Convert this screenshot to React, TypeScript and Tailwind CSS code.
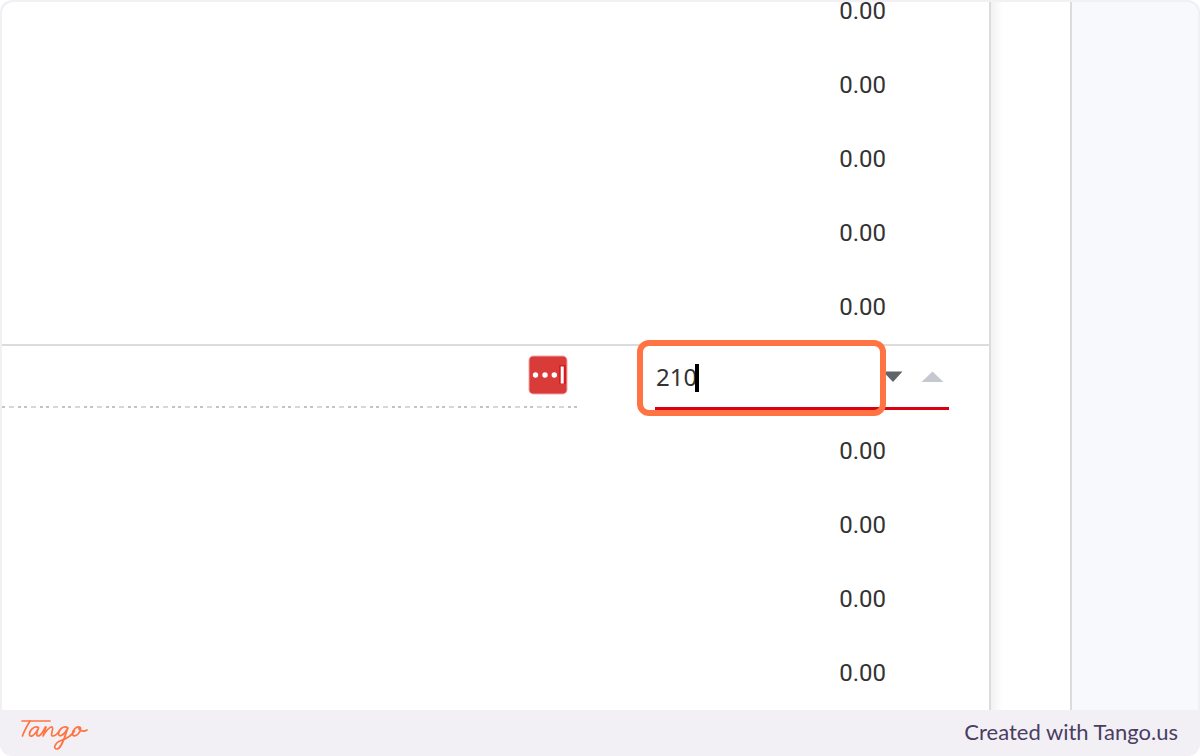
import React, { useState } from 'react';

const ROWS_ABOVE = ['0.00', '0.00', '0.00', '0.00', '0.00'];
const ROWS_BELOW = ['0.00', '0.00', '0.00', '0.00'];

const AmountRow = ({ value }: { value: string }) => (
  <li className="flex h-[74px] items-center justify-end pb-px pr-[103px] font-[Roboto,sans-serif] text-2xl text-[#333333]">
    {value}
  </li>
);

const PinIcon = () => (
  <svg viewBox="0 0 40 40" className="size-10" aria-hidden="true">
    <rect x="0.5" y="0.5" width="39" height="39" rx="5" fill="#efa9a7" />
    <rect x="1.5" y="1.5" width="37" height="37" rx="4" fill="#d83b38" />
    <rect x="31" y="10" width="7" height="19" rx="1" fill="#d61c1f" />
    <circle cx="7.5" cy="20" r="2.7" fill="#fff" />
    <circle cx="17" cy="20" r="2.7" fill="#fff" />
    <circle cx="26.3" cy="20" r="2.7" fill="#fff" />
    <rect x="32.7" y="11.5" width="3" height="17" fill="#fff" />
  </svg>
);

const TangoLogo = () => (
  <svg
    viewBox="0 0 76 40"
    className="h-10 w-[76px]"
    fill="none"
    stroke="#ff7442"
    strokeWidth="1.7"
    strokeLinecap="round"
    strokeLinejoin="round"
    role="img"
    aria-label="Tango"
  >
    <path d="M6 8H34" />
    <path d="M14 8C11 13 8 18 6.5 23" />
    <path d="M22.5 14.5C19 12 13.5 17 13.5 21C13.5 25 18.5 23.5 22.5 15C20.5 20 20 23 22 23C24.5 23 27.5 18 29.5 14" />
    <path d="M30 14L27 23C30 17.5 34 13.5 36 14C38.5 15 33.5 22.5 36.5 23C39 23.2 42 20 43.5 18" />
    <path d="M51.5 14.5C47.5 12 42.5 17 42.5 20.5C42.5 25 48 22.5 52 15C49 22 46 35.5 41 36C36.5 36 39 29.5 45 27.5C51 25.5 56 22 58.5 18" />
    <path d="M63.5 14C60 13 56.5 17.5 56.5 20.5C56.5 24 60 23.5 62.5 20.5C65 17.5 65.5 14 63 14C61.5 17 67 19.5 71 17" />
  </svg>
);

const AmountEditor = () => {
  const [amount, setAmount] = useState('210');

  return (
    <div className="relative flex h-[66px] w-[294px] items-center border-b-[3px] border-[#d9000f]">
      <input
        aria-label="Amount"
        value={amount}
        onChange={(e) => setAmount(e.target.value)}
        className="h-full w-[228px] bg-transparent pl-px pt-0.5 font-['Noto_Sans',sans-serif] text-2xl text-[#333333] caret-transparent outline-none"
      />
      <span className="absolute left-10 top-5 h-7 w-1 bg-black" />
      <button aria-label="Decrease" className="flex h-6 w-5 items-center">
        <svg viewBox="0 0 20 12" className="h-3 w-5" aria-hidden="true">
          <path d="M0 1.5H19.5L10 12Z" fill="#5f6468" />
        </svg>
      </button>
      <button aria-label="Increase" className="ml-[18px] flex h-6 w-6 items-center">
        <svg viewBox="0 0 24 12" className="h-3 w-6" aria-hidden="true">
          <path d="M11.5 1.5L22.5 12H0.5Z" fill="#c5c9cf" />
        </svg>
      </button>
      <div className="pointer-events-none absolute -left-[18px] -top-1 h-19 w-[249px] rounded-xl border-6 border-[#ff7442]" />
    </div>
  );
};

const ActiveRow = () => (
  <li className="flex h-[70px] items-start border-t-2 border-[#dcdcdc] pr-10">
    <div className="flex h-[62px] flex-1 items-start justify-end bg-[repeating-linear-gradient(90deg,#c4c4c4_0_3px,transparent_3px_7px,#d8d8d8_7px_12px,transparent_12px_16px,#c4c4c4_16px_19px,transparent_19px_22px)] bg-[length:100%_2px] bg-bottom bg-no-repeat pr-[9px] pt-[9px]">
      <button aria-label="Open options">
        <PinIcon />
      </button>
    </div>
    <div className="-mt-0.5 ml-[78px]">
      <AmountEditor />
    </div>
  </li>
);

export default function App() {
  return (
    <div className="overflow-hidden rounded-xl bg-[#f2f0f5]">
      <main className="px-0.5 pt-0.5">
        <div className="flex overflow-hidden rounded-t-xl bg-white">
          <ul className="-mt-7 flex-1 border-r-2 border-[#dcdcdc]">
            {ROWS_ABOVE.map((value, i) => (
              <AmountRow key={i} value={value} />
            ))}
            <ActiveRow />
            {ROWS_BELOW.map((value, i) => (
              <AmountRow key={i} value={value} />
            ))}
          </ul>
          <div className="w-[79px] bg-linear-to-r from-[#f2f2f2] to-white to-15%" />
          <aside className="w-32 border-l-2 border-[#dcdcdc] bg-[#f8f9fd]" />
        </div>
      </main>
      <footer className="flex h-[46px] items-center justify-between pl-4 pr-[22px]">
        <TangoLogo />
        <p className="pb-0.5 font-[Lato,sans-serif] text-[22px] leading-6 text-[#4a3d62]">Created with Tango.us</p>
      </footer>
    </div>
  );
}
